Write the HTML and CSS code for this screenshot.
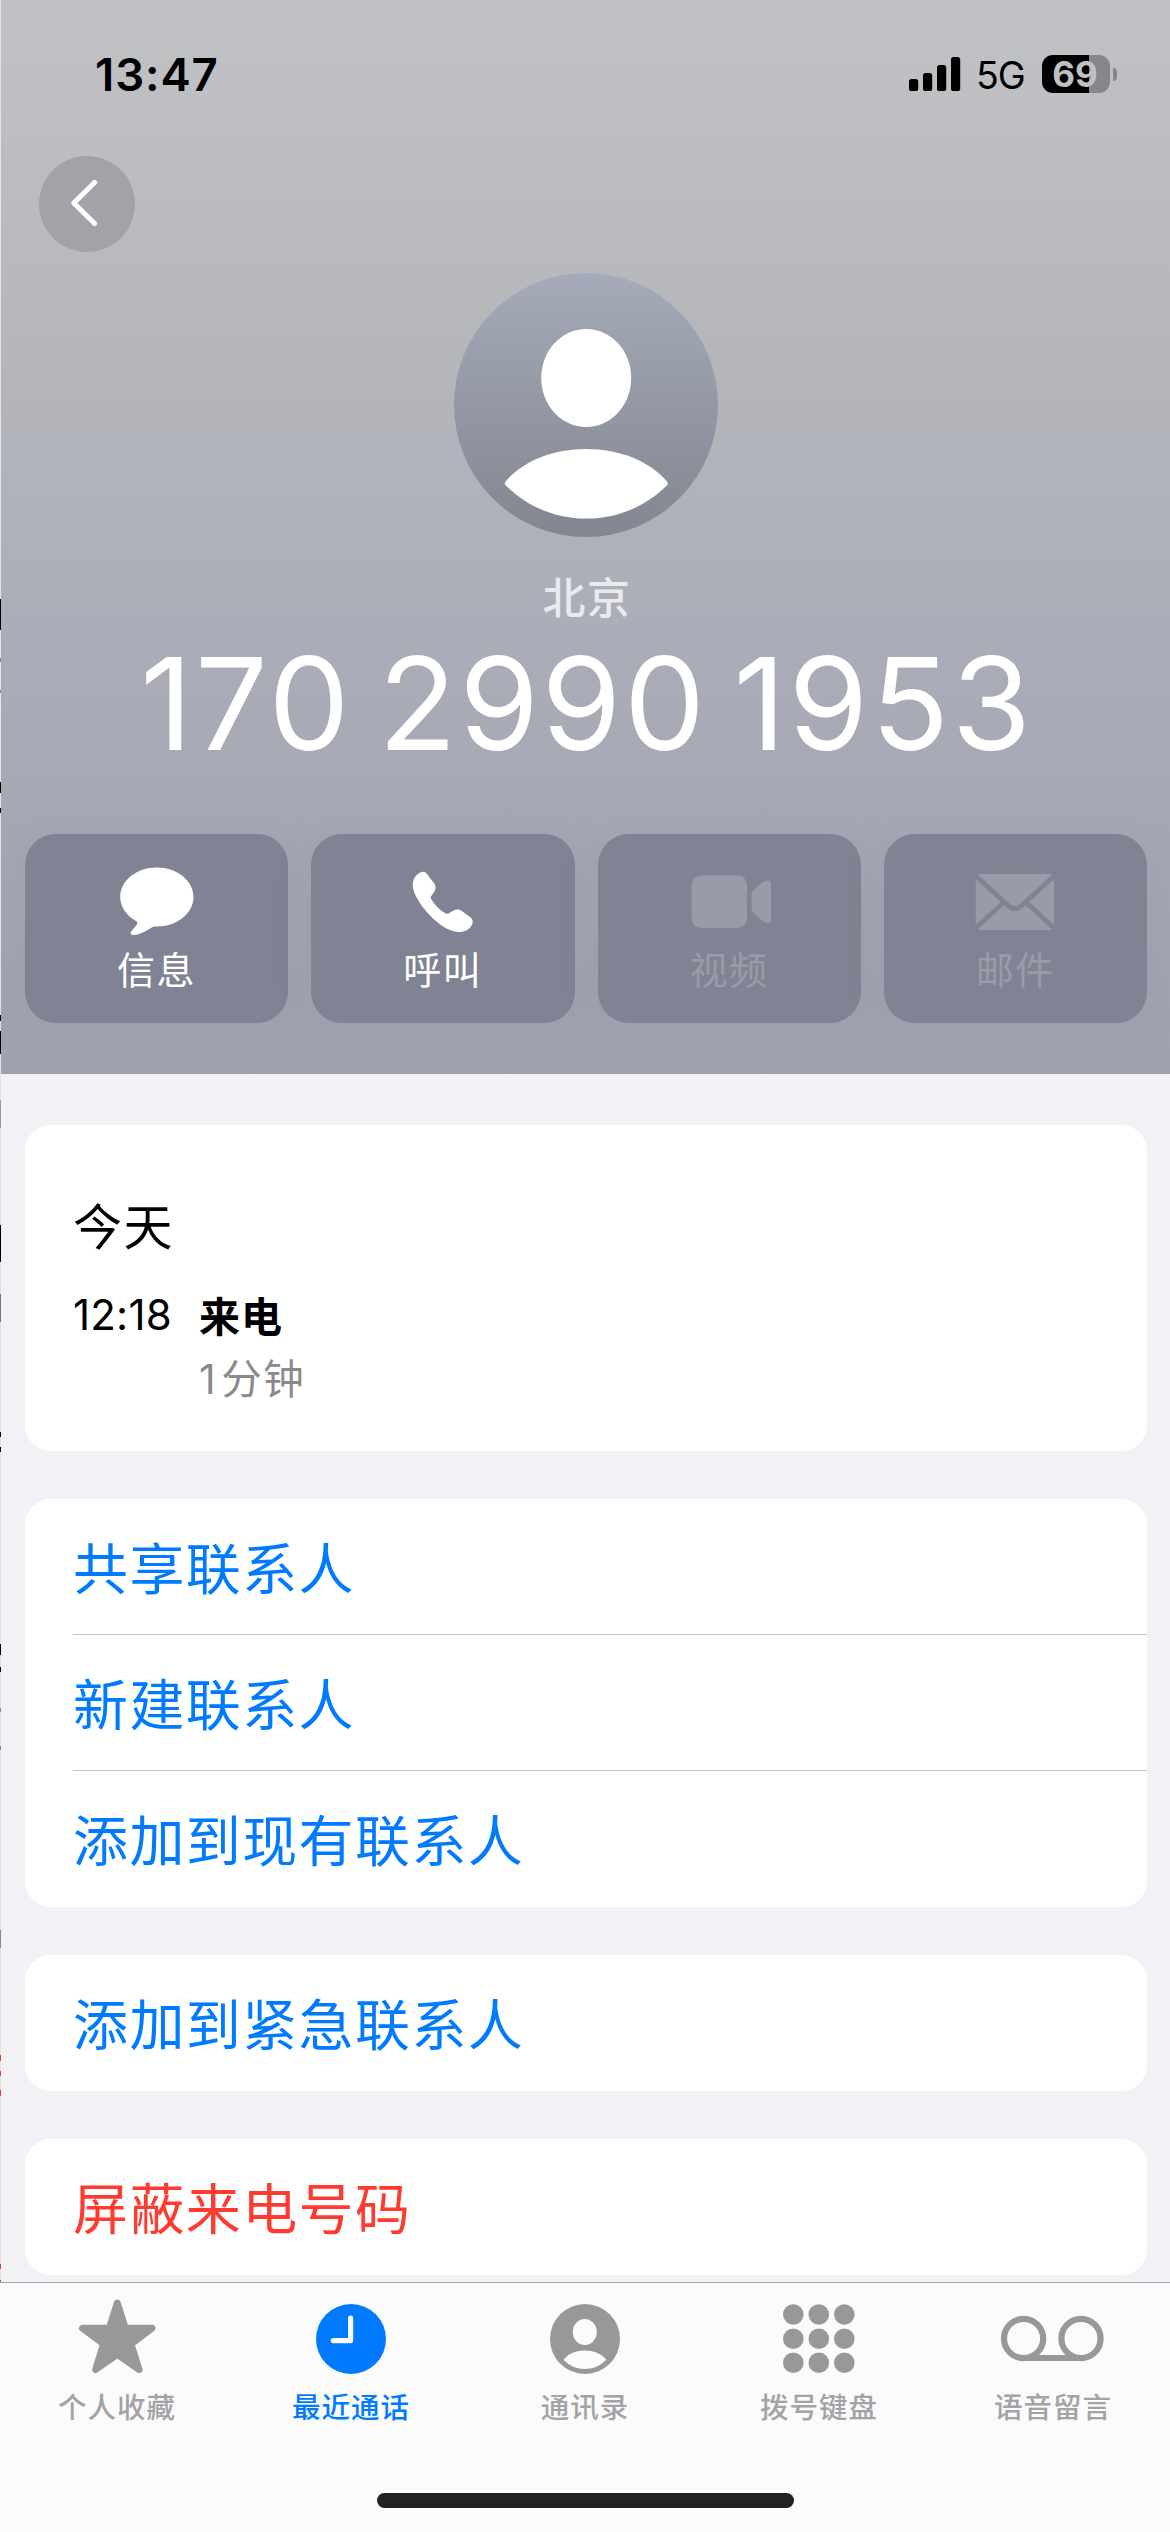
FILE: index.html
```html
<!DOCTYPE html>
<html lang="zh-CN">
<head>
<meta charset="utf-8">
<title>通话详情</title>
<link rel="stylesheet" href="styles.css">
</head>
<body>
<div class="screen">
  <header class="hero">
    <div class="status">
      <span class="clock">13:47</span>
      <div class="indicators">
        <svg class="signal" viewBox="0 0 52 38"><rect y="24" width="9.2" height="12" rx="2.6"/><rect x="14" y="18" width="9.2" height="18" rx="2.6"/><rect x="28" y="10" width="9.2" height="26" rx="2.6"/><rect x="42" y="2" width="9.2" height="34" rx="2.6"/></svg>
        <span class="network">5G</span>
        <div class="battery"><span class="cell">69</span><span class="nub"></span></div>
      </div>
    </div>
    <button class="back" aria-label="返回"><svg viewBox="39 156 96 96"><path d="M94.6 182.5 73.8 203 94.6 223.5"/></svg></button>
    <svg class="avatar" viewBox="454 273 264 264">
      <defs><linearGradient id="disc" x1="0" y1="0" x2="0" y2="1"><stop offset="0" stop-color="#a5abba"/><stop offset="1" stop-color="#838690"/></linearGradient></defs>
      <circle cx="586" cy="405" r="132" fill="url(#disc)"/>
      <ellipse cx="586.2" cy="378" rx="45" ry="49"/>
      <path d="M505.6 481.5C523 461 553 449 586.3 449S649.500 461 667 481.500Q668.600 483.500 667 485.200C645 507 617 518.600 586.300 518.600S527.500 507 505.600 485.200Q504 483.500 505.600 481.500Z"/>
    </svg>
    <p class="region">北京</p>
    <h1 class="number">170 2990 1953</h1>
    <nav class="actions">
      <button class="action">
        <svg viewBox="112 862 88 76"><path d="M155.800 867.500C176 867.500 192.500 880.500 192.500 897S176 926.500 155.800 926.500C153.500 926.300 151.800 926.700 150.300 927.800C144.500 931.800 137.500 935 132.500 935C129.800 935 128.800 933 130.300 931.200C132.800 928.500 135 926 136.200 923.500C136.700 922.500 136.300 921.900 135.300 921.200C125.500 915.500 119.200 907 119.200 897C119.200 880.500 135.600 867.500 155.800 867.500Z"/></svg>
        <span>信息</span>
      </button>
      <button class="action">
        <svg viewBox="398.500 862 88 76"><path d="M412.200 885C412.200 877 418.500 871.700 422.900 871.700C424.500 871.700 425.500 872.700 426.500 874L433.600 883.200C435.400 885.800 435.400 888.500 434.200 891L430.800 896C430 897.200 430 898 430.800 899.300C434.500 905.500 439.500 910.500 444.800 913.300C446.200 914 447 914 448.200 913.200L453.200 910.400C456 909 459 909.300 461.300 911L469.800 917.200C471.600 918.600 472.400 920 472.200 922C471.500 928 465.500 932 459 932C450 932 441 926.500 432 918C420.500 906.500 412.200 894 412.200 885Z"/></svg>
        <span>呼叫</span>
      </button>
      <button class="action off">
        <svg viewBox="685.500 862 88 76"><rect x="692.200" y="875.500" width="55.300" height="52.500" rx="9.500"/><path d="M752 893.500Q752 892.300 753 891.400L763.500 882Q766 880 768.500 880.500Q771.500 881.200 771.500 884V919.500Q771.500 922.500 768.500 923Q766 923.500 763.500 921.300L753 912Q752 911.200 752 910Z"/></svg>
        <span>视频</span>
      </button>
      <button class="action off">
        <svg viewBox="971.300 862 88 76"><rect x="976" y="874" width="78.500" height="56" rx="5"/><path class="fold" d="M974.500 874.500 1009.500 906.500Q1015.300 911 1021 906.500L1056 874.500M974.500 929.500 1004 902.500M1056 929.500 1026.500 902.500"/></svg>
        <span>邮件</span>
      </button>
    </nav>
  </header>

  <main class="content">
    <section class="card log">
      <h2>今天</h2>
      <div class="entry">
        <time>12:18</time>
        <div class="call"><b>来电</b><span><i>1</i>分钟</span></div>
      </div>
    </section>
    <section class="card list">
      <a class="row">共享联系人</a>
      <a class="row">新建联系人</a>
      <a class="row">添加到现有联系人</a>
    </section>
    <section class="card list"><a class="row">添加到紧急联系人</a></section>
    <section class="card list"><a class="row danger">屏蔽来电号码</a></section>
  </main>

  <footer class="tabs">
    <nav class="tabbar">
      <a class="tab">
        <svg viewBox="61 2295 110 84"><path class="star" d="M116.300 2303 124.300 2328.300H151L130 2344 138 2369.500 116.300 2354.300 94.600 2369.500 102.600 2344 81.600 2328.300H108.300Z"/></svg>
        <span>个人收藏</span>
      </a>
      <a class="tab on">
        <svg viewBox="296 2295 110 84"><circle cx="351" cy="2339" r="35"/><path class="hands" d="M350.600 2318.200V2340.600H333.300"/></svg>
        <span>最近通话</span>
      </a>
      <a class="tab">
        <svg viewBox="530 2295 110 84"><circle cx="585" cy="2339" r="35"/><g class="cut"><ellipse cx="584.800" cy="2332" rx="12" ry="13"/><path d="M564 2359Q571 2350.500 584.800 2350.500T605.800 2359Q606.200 2359.800 605.600 2360.400Q597 2369 584.800 2369T564.200 2360.400Q563.500 2359.700 564 2359Z"/></g></svg>
        <span>通讯录</span>
      </a>
      <a class="tab">
        <svg viewBox="764 2295 110 84"><circle cx="793.300" cy="2314.500" r="10.300"/><circle cx="818.800" cy="2314.500" r="10.300"/><circle cx="844.300" cy="2314.500" r="10.300"/><circle cx="793.300" cy="2338.700" r="10.300"/><circle cx="818.800" cy="2338.700" r="10.300"/><circle cx="844.300" cy="2338.700" r="10.300"/><circle cx="793.300" cy="2362.800" r="10.300"/><circle cx="818.800" cy="2362.800" r="10.300"/><circle cx="844.300" cy="2362.800" r="10.300"/></svg>
        <span>拨号键盘</span>
      </a>
      <a class="tab">
        <svg viewBox="998 2295 110 84"><g class="reel"><circle cx="1023.600" cy="2338.500" r="19.600"/><circle cx="1081" cy="2338.500" r="19.600"/><path d="M1023.600 2358H1081"/></g></svg>
        <span>语音留言</span>
      </a>
    </nav>
    <div class="home"></div>
  </footer>
  <div class="edge"></div>
</div>
</body>
</html>
```
FILE: styles.css
```css
* { box-sizing: border-box; margin: 0; padding: 0; }
body { width: 1170px; height: 2532px; overflow: hidden; }
button { border: 0; background: none; font: inherit; color: inherit; }
svg { display: block; }
.screen {
  position: relative;
  display: flex;
  flex-direction: column;
  width: 1170px;
  height: 2532px;
  overflow: hidden;
  background: #f2f1f6;
  font-family: "Noto Sans CJK SC", sans-serif;
}

.hero {
  flex: none;
  display: flex;
  flex-direction: column;
  align-items: center;
  height: 1074px;
  padding: 0 23px 0 25px;
  background: linear-gradient(#c1c2c6 0, #bcbdc1 160px, #b4b5b9 390px, #afb3bb 480px, #a7a9b5 760px, #9fa1ae 1074px);
  color: #fff;
}
.status {
  display: flex;
  justify-content: space-between;
  align-self: stretch;
  height: 156px;
  padding: 55px 30px 0 70px;
  color: #000;
  font-family: Inter, sans-serif;
}
.clock { font-size: 45.5px; font-weight: 600; line-height: 40px; letter-spacing: .9px; }
.indicators { display: flex; height: 38px; }
.signal { width: 52px; height: 38px; margin-right: 15.500px; }
.network { width: 66px; font-size: 37.5px; line-height: 41px; letter-spacing: -1px; }
.battery { display: flex; align-items: center; gap: 3px; }
.cell {
  width: 68px;
  height: 38px;
  padding-right: 2px;
  border-radius: 11px;
  background: linear-gradient(90deg, #000 47px, #86878b 47px);
  color: #c0c1c5;
  font-size: 35px;
  font-weight: 700;
  line-height: 38px;
  text-align: center;
}
.nub { width: 4px; height: 13px; border-radius: 0 5px 5px 0; background: #86878b; }

.back {
  align-self: flex-start;
  width: 96px;
  height: 96px;
  margin-left: 14px;
  border-radius: 50%;
  background: #a2a3a7;
}
.back path { fill: none; stroke: #fff; stroke-width: 5.2; stroke-linecap: round; stroke-linejoin: round; }
.avatar { width: 264px; height: 264px; margin-top: 21px; fill: #fff; }
.region {
  height: 60px;
  margin-top: 28px;
  padding-left: 2px;
  color: #e9eaed;
  font-size: 43px;
  font-weight: 500;
  line-height: 60px;
  letter-spacing: 1.5px;
}
.number {
  height: 160px;
  padding-left: 2px;
  font-family: Inter, sans-serif;
  font-size: 128.5px;
  font-weight: 400;
  line-height: 157px;
  letter-spacing: 2.7px;
  word-spacing: -13px;
  white-space: nowrap;
}
.actions { display: grid; grid-template-columns: repeat(4, 1fr); gap: 23px; width: 1122px; margin-top: 49px; }
.action {
  display: flex;
  flex-direction: column;
  align-items: center;
  height: 189px;
  padding-top: 28px;
  border-radius: 31px;
  background: #808393;
  box-shadow: 0 0 40px rgba(128, 131, 147, .14);
}
.action svg { width: 88px; height: 76px; fill: #fff; }
.action span { margin-top: 4px; font-size: 38px; line-height: 52px; letter-spacing: 1.5px; }
.off { color: #999ba8; }
.off svg { fill: #999ba8; }
.off .fold { fill: none; stroke: #808393; stroke-width: 4.800; }

.content { display: flex; flex-direction: column; gap: 48px; padding: 51px 23px 0 25px; height: 1208px; overflow: hidden; }
.card { flex: none; border-radius: 26px; background: #fff; overflow: hidden; }
.log { height: 326px; padding: 63px 48px 0; }
.log h2 { font-size: 49px; font-weight: 400; line-height: 72px; letter-spacing: 1.5px; }
.entry { display: flex; margin-top: 24px; }
.entry time { width: 126px; font-family: Inter, sans-serif; font-size: 42px; line-height: 61px; letter-spacing: .2px; }
.call { display: flex; flex-direction: column; font-size: 41px; line-height: 60px; }
.call b { font-weight: 700; letter-spacing: 1px; }
.call span { margin-top: 3px; color: #8a8a8e; font-size: 40.5px; letter-spacing: 1.5px; }
.call i { margin-right: 4px; font-family: Inter, sans-serif; font-size: 41px; font-style: normal; }
.list { padding-left: 48px; }
.row { display: block; height: 136px; color: #007aff; font-size: 55px; line-height: 132px; letter-spacing: 1.4px; }
.row:not(:last-child) { border-bottom: 1px solid #c4c4c7; }
.danger { color: #ff3b30; }

.tabs { flex: none; height: 250px; border-top: 1px solid #a7a7ab; background: #fbfbfc; }
.tabbar { display: grid; grid-template-columns: repeat(5, 234px); height: 210px; padding-top: 12px; }
.tab { display: flex; flex-direction: column; align-items: center; color: #a3a3a5; font-size: 28.500px; font-weight: 500; line-height: 40px; letter-spacing: 1px; }
.tab svg { width: 110px; height: 84px; fill: #98989b; }
.tab span { margin-top: 7px; }
.tab.on { color: #007aff; }
.tab.on svg { fill: #007aff; }
.star { stroke: #98989b; stroke-width: 7; stroke-linejoin: round; }
.hands { fill: none; stroke: #fbfbfc; stroke-width: 5.200; stroke-linecap: round; stroke-linejoin: round; }
.tab .cut { fill: #fbfbfc; }
.tab .reel { fill: none; stroke: #98989b; stroke-width: 6.200; }
.home { width: 417px; height: 15px; margin-left: 377px; border-radius: 8px; background: #212121; }

/* Sliver of the call list still visible under the pushed view */
.edge {
  position: absolute;
  top: 0;
  left: 0;
  width: 1px;
  height: 2282px;
  background: linear-gradient(#e4e4e4 599px, #000 599px 630px, #e4e4e4 630px 658px, #888 658px 662px, #e4e4e4 662px 690px, #888 690px 693px, #e4e4e4 693px 782px, #000 782px 793px, #e4e4e4 793px 808px, #000 808px 813px, #e4e4e4 813px 1015px, #000 1015px 1021px, #e4e4e4 1021px 1031px, #000 1031px 1054px, #e4e4e4 1054px 1100px, #999 1100px 1128px, #e4e4e4 1128px 1225px, #000 1225px 1262px, #e4e4e4 1262px 1294px, #777 1294px 1322px, #e4e4e4 1322px 1432px, #000 1432px 1437px, #e4e4e4 1437px 1447px, #000 1447px 1452px, #e4e4e4 1452px 1644px, #000 1644px 1655px, #e4e4e4 1655px 1667px, #000 1667px 1672px, #e4e4e4 1672px 1708px, #888 1708px 1712px, #e4e4e4 1712px 1746px, #888 1746px 1750px, #e4e4e4 1750px 1930px, #888 1930px 1948px, #e4e4e4 1948px 2055px, #f3362c 2055px 2061px, #e4e4e4 2061px 2071px, #f3362c 2071px 2076px, #e4e4e4 2076px 2090px, #f3362c 2090px 2096px, #e4e4e4 2096px 2264px, #f3362c 2264px 2269px, #e4e4e4 2269px 2280px, #f3362c 2280px);
}
```
